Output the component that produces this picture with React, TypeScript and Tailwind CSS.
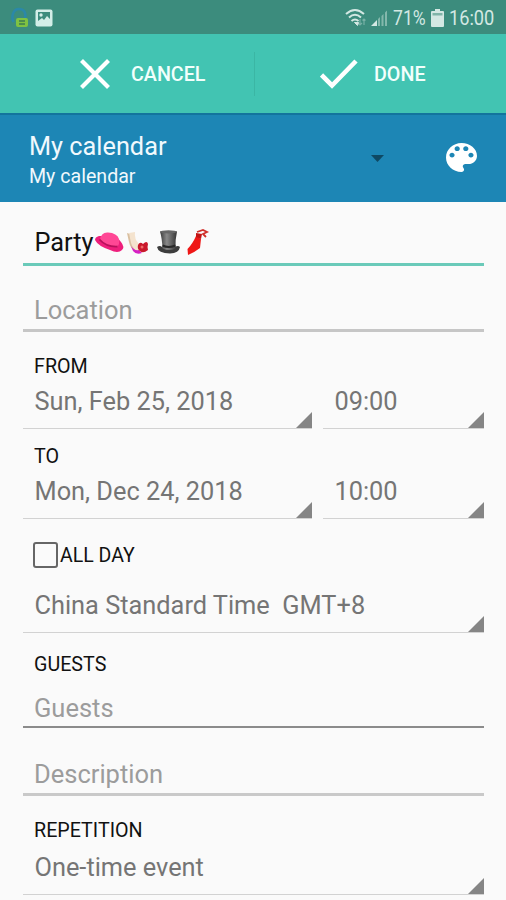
import type { ReactNode } from "react";

function Corner() {
  return (
    <svg className="h-4 w-4 shrink-0" viewBox="0 0 16 16">
      <path d="M16 0V16H0Z" fill="#858585" />
    </svg>
  );
}

function Spinner({ children, className = "" }: { children: ReactNode; className?: string }) {
  return (
    <div className={`flex items-end justify-between border-b border-[#d2d2d2] pl-[11.5px] ${className}`}>
      <span className="h-[42px] whitespace-pre text-[25.35px] leading-[30px] text-[#757575]">{children}</span>
      <Corner />
    </div>
  );
}

function Label({ children, className = "" }: { children: ReactNode; className?: string }) {
  return <div className={`pl-[11px] text-[19.7px] leading-6 text-[#111] ${className}`}>{children}</div>;
}

function StatusBar() {
  return (
    <header className="flex h-[34px] items-center bg-[#3c8c7d] pl-[11px] pr-[11px] pt-px text-[#d3e8e3]">
      <svg className="h-[22px] w-[18px]" viewBox="0 0 18 22">
        <path d="M2.500 15C0 10 2 2 8 2s7 5 6 9" fill="none" stroke="#2b88a8" strokeWidth="2.600" />
        <rect x="5" y="11" width="12" height="9" rx="2" fill="#7fc242" />
        <path d="M8 14h6M8 17h6" stroke="#3c7c50" strokeWidth="1.500" />
      </svg>
      <svg className="ml-[6px] h-[18px] w-[18px]" viewBox="0 0 18 18">
        <rect x="0.5" y="0.5" width="17" height="17" rx="2" fill="#d3eee8" />
        <path d="M3 3h12v7l-3-3-3 4-2-2-4 3z" fill="#3c8c7d" />
        <circle cx="6" cy="6" r="1.7" fill="#d3eee8" />
      </svg>
      <div className="ml-auto flex items-center">
        <svg className="h-[19px] w-[22px]" viewBox="0 0 22 19" fill="none" stroke="currentColor">
          <path d="M1 6q9-8 18 0M4 9.500q6-5.500 12 0M6.500 13q3.500-3 7 0" strokeWidth="2" />
          <path d="M9.500 14.500h4l-1 3z" fill="currentColor" />
          <path d="M15 11v6M13 15l2 2 2-2M19 17v-6M17.500 12.500l1.500-1.500 1.500 1.500" strokeWidth="1.200" opacity=".4" />
        </svg>
        <svg className="ml-[3px] h-[18px] w-[18px]" viewBox="0 0 18 18">
          <path d="M1 17L7 11v6z" fill="currentColor" />
          <path d="M8 10l2-2v9H8zM11.500 7l2-2v12h-2zM15 3.500l2-2V17h-2z" fill="#84b8ac" />
        </svg>
        <span className="ml-[5px] w-[34px] origin-left scale-x-[.88] whitespace-nowrap text-[20px] leading-6">71%</span>
        <svg className="ml-1 h-[18px] w-[13px]" viewBox="0 0 13 18">
          <path d="M4 0h5v2h3q1 0 1 1v14q0 1-1 1H1q-1 0-1-1V3q0-1 1-1h3z" fill="currentColor" />
          <path d="M1.500 4h10v2.500h-10z" fill="#7fb4a8" />
        </svg>
        <span className="ml-[5px] w-[46px] origin-left scale-x-[.91] text-[20px] leading-6">16:00</span>
      </div>
    </header>
  );
}

function ActionBar() {
  return (
    <div className="flex h-[79px] bg-[#42c4b2] text-[19.7px] font-medium text-[#f2fffc]">
      <button className="flex w-[254px] items-center pl-[79px]">
        <svg className="h-[32px] w-[32px]" viewBox="0 0 32 32">
          <path d="M2.500 2.500l27 27M29.500 2.500l-27 27" stroke="#fff" strokeWidth="4.200" />
        </svg>
        <span className="ml-5 pt-[2px]">CANCEL</span>
      </button>
      <div className="my-auto h-[44px] w-px bg-[#3bb6a4]" />
      <button className="flex flex-1 items-center pl-[65px]">
        <svg className="h-[32px] w-[38px]" viewBox="0 0 38 32">
          <path d="M1.500 17l10.500 10.500L36 3" fill="none" stroke="#fff" strokeWidth="4.600" />
        </svg>
        <span className="ml-[16px] pt-[2px]">DONE</span>
      </button>
    </div>
  );
}

function CalendarHeader() {
  return (
    <div className="flex h-[89px] items-center border-t-2 border-[#13749d] bg-[#1d86b5] pl-[29px] pr-[29px] text-[#f1f9fd]">
      <div className="flex flex-col pt-[6px]">
        <span className="text-[25.3px] leading-[30px]">My calendar</span>
        <span className="text-[19.6px] leading-[29px]">My calendar</span>
      </div>
      <svg className="ml-auto h-[7px] w-[13px]" viewBox="0 0 13 7">
        <path d="M0 0h13L6.500 7z" fill="#0e4964" />
      </svg>
      <svg className="mb-[3px] ml-[62px] h-[29px] w-[31px]" viewBox="3 3 18 18" preserveAspectRatio="none">
        <path
          fill="#fff"
          d="M12 3c-4.970 0-9 4.030-9 9s4.030 9 9 9c.830 0 1.500-.670 1.500-1.500 0-.390-.150-.740-.390-1.010-.230-.260-.380-.610-.380-.990 0-.830.670-1.500 1.500-1.500H16c2.760 0 5-2.240 5-5 0-4.420-4.030-8-9-8zm-5.500 9c-.830 0-1.500-.670-1.500-1.500S5.670 9 6.500 9 8 9.670 8 10.500 7.330 12 6.500 12zm3-4C8.670 8 8 7.330 8 6.500S8.670 5 9.500 5s1.500.670 1.500 1.500S10.330 8 9.500 8zm5 0c-.830 0-1.500-.670-1.500-1.500S13.670 5 14.500 5s1.500.670 1.500 1.500S15.330 8 14.500 8zm3 4c-.830 0-1.500-.670-1.500-1.500S16.670 9 17.500 9s1.500.670 1.500 1.500-.670 1.500-1.500 1.500z"
        />
      </svg>
    </div>
  );
}

function PartyIcons() {
  return (
    <svg className="h-[30px] w-[116px]" viewBox="0 0 116 30">
      <defs>
        <linearGradient id="felt" x1="0" x2="1">
          <stop offset="0" stopColor="#3b3b3b" />
          <stop offset=".4" stopColor="#8a8a8a" />
          <stop offset="1" stopColor="#343434" />
        </linearGradient>
      </defs>
      <path d="M1 13Q1 10 5 9Q24 8 27 15Q31 20 28 23Q24 27 16 23Q4 19 1 13Z" fill="#ee1f7c" />
      <path d="M6 13Q7 5 14 5.500Q23 6 25 12Q26 17 23 20Q12 20 6 13Z" fill="#ff4795" />
      <path d="M5.500 12.500Q12 20 23.500 19.500" fill="none" stroke="#b9105c" strokeWidth="1.800" />
      <path d="M33 6l3 1 5 12 4 5-3 1q-6-4-7-10z" fill="#d9bfa0" />
      <path d="M35 6l6-1q-1 7 4 12l6 5-5 4q-7-3-9-10z" fill="#f4e3ce" />
      <path d="M37 19q3 5 8 4l3 3q-6 2-9-2z" fill="#d620c4" />
      <path d="M44 18q2-4 5-1 4-4 5 0-1 3 0 6-5 4-8 1-3-2-2-6z" fill="#c9182c" />
      <circle cx="48" cy="20" r="1.5" fill="#f06a68" />
      <path d="M63 20q3-2 5 0 7 3 13 0 3-2 5 0-1 6-10 6.500Q64 26 63 20Z" fill="#3d3d3d" />
      <path d="M66 4.500h17q-2 9-1.500 17-6 3-13 0Q68 11 66 4.500Z" fill="url(#felt)" />
      <ellipse cx="74.500" cy="4.800" rx="8.500" ry="1.600" fill="#666" />
      <path d="M68.500 18.500q6 3 13 0" stroke="#292929" strokeWidth="2" fill="none" />
      <path d="M102 9l5 3-1 9q-5 4-12 7l-.5-6q5-5 8.500-13z" fill="#ef1716" />
      <path d="M102 6l6 1-1 5-5-2z" fill="#c31414" />
      <path d="M103 5l6-2 4 2-4 2 3 3" fill="none" stroke="#d0302b" strokeWidth="1.800" />
    </svg>
  );
}

export default function App() {
  return (
    <main className="h-[900px] w-full overflow-hidden bg-[#fafafa] font-[Roboto,'Liberation_Sans',sans-serif]">
      <StatusBar />
      <ActionBar />
      <CalendarHeader />
      <form className="flex flex-col pl-[23px] pr-[22px]">
        <div className="flex h-[64px] items-start border-b-[3px] border-[#6acab9] pl-[11.5px] pt-[25px]">
          <span className="pt-px text-[25.3px] leading-[30px] text-[#111]">Party</span>
          <PartyIcons />
        </div>
        <div className="h-[66px] border-b-[3px] border-[#c6c6c6] pl-[11px] pt-[29px] text-[25.5px] leading-[30px] text-[#9c9c9c]">
          Location
        </div>
        <Label className="pt-[23px]">FROM</Label>
        <div className="flex h-[50px] gap-[11px]">
          <Spinner className="w-[289px]">Sun, Feb 25, 2018</Spinner>
          <Spinner className="flex-1">09:00</Spinner>
        </div>
        <Label className="pt-[16px]">TO</Label>
        <div className="flex h-[50px] gap-[11px]">
          <Spinner className="w-[289px]">Mon, Dec 24, 2018</Spinner>
          <Spinner className="flex-1">10:00</Spinner>
        </div>
        <label className="mt-[22px] flex h-[27px] items-center pl-[10px] text-[19.5px] leading-6 text-[#111]">
          <span className="h-[26px] w-[25px] rounded-[3px] border-[2px] border-[#666]" />
          <span className="ml-[2px] pt-[2px]">ALL DAY</span>
        </label>
        <Spinner className="mt-[14px] h-[51px]">{"China Standard Time  GMT+8"}</Spinner>
        <Label className="pt-[20px]">GUESTS</Label>
        <div className="h-[51px] border-b-[2px] border-[#8b8b8b] pl-[11px] pt-[16px] text-[25.5px] leading-[30px] text-[#9c9c9c]">
          Guests
        </div>
        <div className="h-[68px] border-b-[3px] border-[#c9c9c9] pl-[11px] pt-[31px] text-[25.5px] leading-[30px] text-[#9c9c9c]">
          Description
        </div>
        <Label className="pt-[23px]">REPETITION</Label>
        <Spinner className="h-[52px]">One-time event</Spinner>
      </form>
    </main>
  );
}
